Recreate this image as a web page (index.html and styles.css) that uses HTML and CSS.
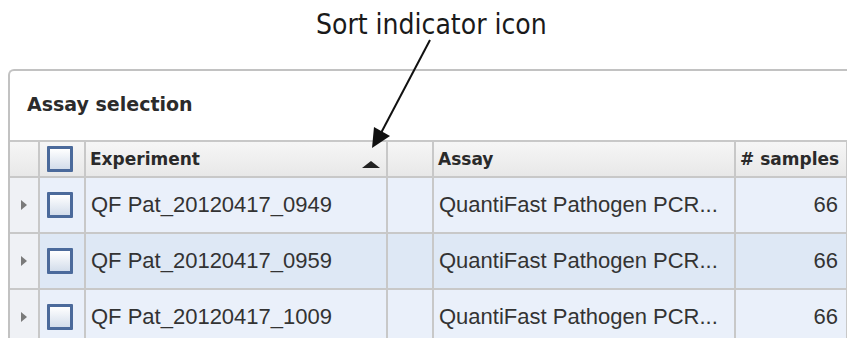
FILE: index.html
```html
<!DOCTYPE html>
<html lang="en">
<head>
    <meta charset="UTF-8">
    <title>Assay selection</title>
    <link rel="stylesheet" href="styles.css">
</head>
<body>
    <div class="callout">Sort indicator icon</div>
    <svg class="pointer" width="847" height="160" viewBox="0 0 847 160">
        <line x1="430" y1="40" x2="381" y2="133" stroke="#111" stroke-width="2"/>
        <polygon points="372,148 374,127 390,136" fill="#111"/>
    </svg>

    <div class="panel">
        <div class="panel-title">Assay selection</div>
        <table class="grid">
            <colgroup>
                <col class="c-gutter">
                <col class="c-check">
                <col class="c-wide">
                <col class="c-check">
                <col class="c-wide">
                <col class="c-num">
                <col class="c-rest">
            </colgroup>
            <thead>
                <tr>
                    <th class="gutter"></th>
                    <th class="check"><span class="box"></span></th>
                    <th><div class="sorted">Experiment<span class="sort-up"></span></div></th>
                    <th></th>
                    <th>Assay</th>
                    <th># samples</th>
                    <th></th>
                </tr>
            </thead>
            <tbody>
                <tr>
                    <td class="gutter"><span class="expand"></span></td>
                    <td class="check"><span class="box"></span></td>
                    <td>QF Pat_20120417_0949</td>
                    <td></td>
                    <td>QuantiFast Pathogen PCR...</td>
                    <td class="num">66</td>
                    <td></td>
                </tr>
                <tr class="alt">
                    <td class="gutter"><span class="expand"></span></td>
                    <td class="check"><span class="box"></span></td>
                    <td>QF Pat_20120417_0959</td>
                    <td></td>
                    <td>QuantiFast Pathogen PCR...</td>
                    <td class="num">66</td>
                    <td></td>
                </tr>
                <tr>
                    <td class="gutter"><span class="expand"></span></td>
                    <td class="check"><span class="box"></span></td>
                    <td>QF Pat_20120417_1009</td>
                    <td></td>
                    <td>QuantiFast Pathogen PCR...</td>
                    <td class="num">66</td>
                    <td></td>
                </tr>
            </tbody>
        </table>
    </div>
</body>
</html>
```

FILE: styles.css
```css
body {
    margin: 0;
    width: 847px;
    height: 338px;
    overflow: hidden;
    background: white;
    position: relative;
}
.callout {
    height: 69px;
    padding-left: 316px;
    box-sizing: border-box;
    padding-top: 8px;
    font-family: "DejaVu Sans Condensed", "DejaVu Sans", sans-serif;
    font-stretch: condensed;
    font-size: 28px;
    line-height: 34px;
    color: #1a1a1a;
}
.pointer {
    position: absolute;
    left: 0;
    top: 0;
    z-index: 2;
}
.panel {
    margin-left: 8px;
    width: 960px;
    border: 2px solid #c2c2c2;
    border-right: none;
    border-bottom: none;
    border-top-left-radius: 6px;
    background: white;
}
.panel-title {
    height: 69px;
    padding-left: 17px;
    font-family: "DejaVu Sans", sans-serif;
    font-weight: bold;
    font-size: 19px;
    line-height: 66px;
    color: #2b2b2b;
    border-bottom: 2px solid #c8c8c8;
}
.grid {
    border-collapse: separate;
    border-spacing: 0;
    table-layout: fixed;
    width: 958px;
}
.c-gutter { width: 30px; }
.c-check { width: 46px; }
.c-wide { width: 302px; }
.c-num { width: 112px; }
.c-rest { width: 120px; }
th, td {
    border-right: 2px solid #c8c8c8;
    border-bottom: 2px solid #c8c8c8;
    padding: 0 0 0 5px;
    text-align: left;
    white-space: nowrap;
    overflow: hidden;
}
th {
    height: 34px;
    padding-left: 4px;
    background: linear-gradient(#f6f6f6, #e8e8e8);
    font-family: "DejaVu Sans", sans-serif;
    font-weight: bold;
    font-size: 17px;
    color: #2a2a2a;
}
td {
    height: 54px;
    background: #eaf0fa;
    font-family: "Liberation Sans", Arial, sans-serif;
    font-size: 22px;
    color: #333;
}
tr.alt td {
    background: #dee8f5;
}
td.gutter, tr.alt td.gutter {
    background: #eff1f5;
}
th.gutter, td.gutter {
    padding-left: 11px;
}
th.check, td.check {
    padding-left: 7px;
}
td.num {
    text-align: right;
    padding-right: 8px;
}
.box {
    display: block;
    width: 20px;
    height: 20px;
    border: 3px solid #4b6a9b;
    border-radius: 1px;
    background: linear-gradient(#ffffff, #d3ddeb);
}
.expand {
    display: block;
    width: 0;
    height: 0;
    border-top: 5px solid transparent;
    border-bottom: 5px solid transparent;
    border-left: 6px solid #7a7a7a;
}
.sorted {
    display: flex;
    align-items: center;
    justify-content: space-between;
    padding-right: 6px;
}
.sort-up {
    width: 0;
    height: 0;
    border-left: 9px solid transparent;
    border-right: 9px solid transparent;
    border-bottom: 7px solid #222;
    margin-top: 10px;
}
```
